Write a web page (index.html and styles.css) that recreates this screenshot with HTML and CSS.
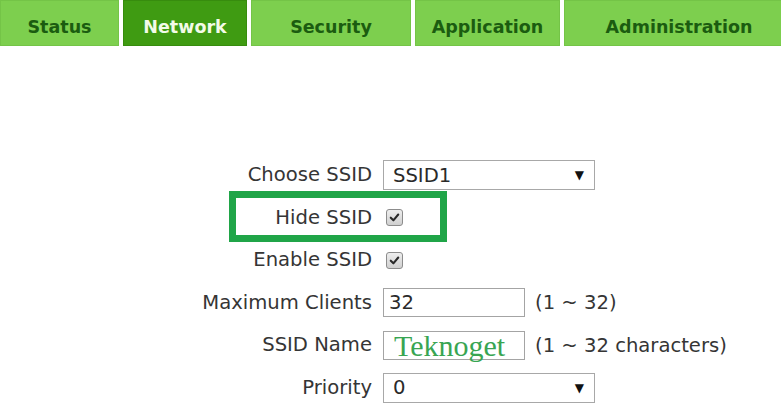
FILE: index.html
```html
<!DOCTYPE html>
<html>
<head>
<meta charset="utf-8">
<link rel="stylesheet" href="styles.css">
</head>
<body>
<nav class="tabs">
  <div class="tab tab-status">Status</div>
  <div class="tab tab-network active">Network</div>
  <div class="tab tab-security">Security</div>
  <div class="tab tab-application">Application</div>
  <div class="tab tab-admin">Administration</div>
</nav>
<form class="form">
  <label class="label">Choose SSID</label>
  <div class="control">
    <div class="select"><span>SSID1</span><span class="arrow">&#9660;</span></div>
  </div>

  <label class="label">Hide SSID</label>
  <div class="control"><span class="check"><svg viewBox="0 0 16 16" width="16" height="16"><path d="M4 8.2 L6.8 11 L12 4.8" fill="none" stroke="#2a2a2a" stroke-width="2.2" stroke-linecap="round" stroke-linejoin="round"/></svg></span></div>

  <label class="label">Enable SSID</label>
  <div class="control"><span class="check"><svg viewBox="0 0 16 16" width="16" height="16"><path d="M4 8.2 L6.8 11 L12 4.8" fill="none" stroke="#2a2a2a" stroke-width="2.2" stroke-linecap="round" stroke-linejoin="round"/></svg></span></div>

  <label class="label">Maximum Clients</label>
  <div class="control"><div class="input">32</div><span class="hint">(1 ~ 32)</span></div>

  <label class="label">SSID Name</label>
  <div class="control"><div class="input input-name">Teknoget</div><span class="hint">(1 ~ 32 characters)</span></div>

  <label class="label">Priority</label>
  <div class="control">
    <div class="select"><span>0</span><span class="arrow">&#9660;</span></div>
  </div>

  <div class="highlight"></div>
</form>
</body>
</html>
```

FILE: styles.css
```css
* { box-sizing: border-box; }
html, body { margin: 0; padding: 0; background: #ffffff; }
body {
  width: 781px;
  height: 410px;
  overflow: hidden;
  font-family: "DejaVu Sans", Verdana, sans-serif;
  color: #353535;
}
.tabs {
  display: flex;
  gap: 4px;
  height: 46px;
}
.tab {
  flex: none;
  height: 46px;
  background: #7dcf4e;
  color: #1b5c10;
  font-weight: bold;
  font-size: 17.5px;
  display: flex;
  align-items: center;
  justify-content: center;
  padding-top: 7px;
  box-shadow: inset 0 0 0 1px #74c447;
}
.tab.active {
  background: #3f9b12;
  color: #f3fbe8;
  box-shadow: inset 0 0 0 1px #378c0e;
}
.tab-status { width: 119px; }
.tab-network { width: 124px; }
.tab-security { width: 160px; }
.tab-application { width: 145px; }
.tab-admin { width: 230px; padding-left: 0; }

.form {
  position: relative;
  margin-top: 114px;
  display: grid;
  grid-template-columns: 372px 1fr;
  grid-auto-rows: 30px;
  column-gap: 11px;
  row-gap: 12.5px;
}
.label {
  text-align: right;
  font-size: 19.6px;
  line-height: 30px;
  white-space: nowrap;
}
.control {
  display: flex;
  align-items: center;
  gap: 10px;
}
.select {
  width: 212px;
  height: 30px;
  border: 1px solid #a8a8a8;
  background: #fff;
  display: flex;
  align-items: center;
  justify-content: space-between;
  padding: 0 10px 0 9px;
  font-size: 19.6px;
  color: #2a2a2a;
}
.arrow {
  font-size: 12px;
  color: #111;
}
.input {
  width: 142px;
  height: 29px;
  border: 1px solid #a4a4a4;
  background: #fff;
  padding-left: 5px;
  font-size: 19.6px;
  line-height: 27px;
  color: #2a2a2a;
}
.input-name {
  font-family: "Liberation Serif", "Times New Roman", serif;
  font-size: 30px;
  line-height: 27px;
  color: #38a552;
  padding-left: 10px;
  overflow: visible;
}
.hint {
  font-size: 19.6px;
  color: #353535;
  white-space: nowrap;
}
.check {
  margin-left: 3px;
  width: 17px;
  height: 17px;
  border: 1px solid #8c8c8c;
  border-radius: 3px;
  background: linear-gradient(#eeeeee, #d0d0d0);
  display: flex;
  align-items: center;
  justify-content: center;
}
.check svg { display: block; width: 15px; height: 15px; }
.highlight {
  position: absolute;
  left: 229px;
  top: 31px;
  width: 218px;
  height: 51px;
  border: 7px solid #20a548;
  pointer-events: none;
}
```
